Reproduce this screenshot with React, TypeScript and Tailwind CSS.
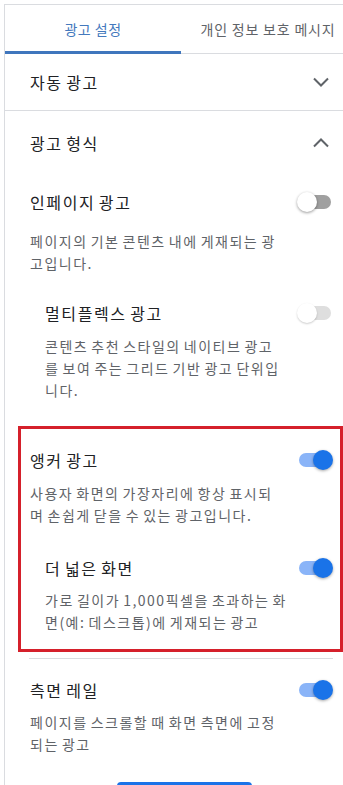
import React from 'react';

type ToggleState = 'on' | 'off' | 'disabled';

const Toggle: React.FC<{ state: ToggleState }> = ({ state }) => {
  const track =
    state === 'on' ? 'bg-[#8ab4f8]' : state === 'off' ? 'bg-[#a0a0a0]' : 'bg-[#dedede]';
  const thumb =
    state === 'on'
      ? 'right-0 bg-[#1a73e8] shadow-[0_1px_3px_rgba(0,0,0,0.35)]'
      : state === 'off'
        ? 'left-0 bg-white shadow-[0_1px_3px_rgba(0,0,0,0.4)]'
        : 'left-0 bg-white shadow-[0_1px_2px_rgba(0,0,0,0.2)]';
  return (
    <div className="relative h-[20px] w-[36px] shrink-0">
      <div className={`absolute left-[2px] right-[2px] top-[3px] h-[14px] rounded-full ${track}`} />
      <div className={`absolute top-0 h-[20px] w-[20px] rounded-full ${thumb}`} />
    </div>
  );
};

const Chevron: React.FC<{ up?: boolean }> = ({ up }) => (
  <svg width="24" height="24" viewBox="0 0 24 24" className="shrink-0">
    <path
      d={up ? 'M5 15.5L12 8.5L19 15.5' : 'M5 8.5L12 15.5L19 8.5'}
      fill="none"
      stroke="#5f6368"
      strokeWidth="2"
    />
  </svg>
);

// headings and descriptions get extra tracking so Hangul runs as wide as the original font
const heading = 'text-[16px] tracking-[1.6px] [word-spacing:-1.6px] text-[#202124]';
const body = 'text-[14px] leading-[22px] tracking-[1.5px] [word-spacing:-1.5px] text-[#5f6368]';

interface AdItemProps {
  title: string;
  desc: string;
  state: ToggleState;
  indent?: boolean;
  className?: string;
  descGap?: string;
  descWidth?: string;
}

const AdItem: React.FC<AdItemProps> = ({
  title,
  desc,
  state,
  indent,
  className = '',
  descGap = 'mt-[10px]',
  descWidth = 'w-[250px]',
}) => (
  <div className={className}>
    <div className={`flex h-[24px] items-center justify-between ${indent ? 'pl-[15px]' : ''}`}>
      <span className={`${heading} leading-[24px]`}>{title}</span>
      <Toggle state={state} />
    </div>
    <p className={`${descGap} ${body} ${descWidth} ${indent ? 'ml-[15px]' : ''}`}>{desc}</p>
  </div>
);

export default function App() {
  return (
    <div className="h-[785px] w-[343px] overflow-hidden bg-white font-['Noto_Sans_CJK_KR','Noto_Sans',sans-serif]">
      <div className="ml-[4px] mt-[4px] w-[353px] border-l border-t border-[#dadce0]">
        {/* tabs */}
        <div className="grid h-[49px] grid-cols-[176px_176px] border-b border-[#dadce0]">
          <div className="relative flex items-center justify-center text-[14px] tracking-[0.5px] text-[#4479bd]">
            광고 설정
            <div className="absolute bottom-[-1px] left-0 right-0 h-[3px] bg-[#3f76bd]" />
          </div>
          <div className="flex items-center justify-center pr-[2px] text-[14px] tracking-[0.8px] text-[#5f6368]">
            개인 정보 보호 메시지
          </div>
        </div>

        {/* auto ads */}
        <div className="flex h-[57px] items-center justify-between border-b border-[#dadce0] pb-[1px] pl-[25px] pr-[24px]">
          <span className={heading}>자동 광고</span>
          <Chevron />
        </div>

        {/* ad formats */}
        <div className="pl-[25px] pr-[24px]">
          <div className="flex h-[64px] items-center justify-between">
            <span className={heading}>광고 형식</span>
            <Chevron up />
          </div>

          <AdItem
            className="mt-[15px]"
            descGap="mt-[16px]"
            title="인페이지 광고"
            desc="페이지의 기본 콘텐츠 내에 게재되는 광고입니다."
            state="off"
          />
          <AdItem
            className="mt-[27px]"
            descGap="mt-[10px]"
            descWidth="w-[235px]"
            indent
            title="멀티플렉스 광고"
            desc="콘텐츠 추천 스타일의 네이티브 광고를 보여 주는 그리드 기반 광고 단위입니다."
            state="disabled"
          />

          {/* highlighted anchor section */}
          <div className="relative mt-[25px] pb-[19px] pt-[22px]">
            <div className="pointer-events-none absolute -left-[12px] -right-[10px] bottom-0 top-0 border-[3px] border-[#d5202b]" />
            <AdItem
              descGap="mt-[10px]"
              title="앵커 광고"
              desc="사용자 화면의 가장자리에 항상 표시되며 손쉽게 닫을 수 있는 광고입니다."
              state="on"
            />
            <AdItem
              className="mt-[30px]"
              descGap="mt-[9px]"
              descWidth="w-[248px]"
              indent
              title="더 넓은 화면"
              desc="가로 길이가 1,000픽셀을 초과하는 화면(예: 데스크톱)에 게재되는 광고"
              state="on"
            />
          </div>

          <div className="-ml-px mt-[6px] border-t border-[#dadce0]" />

          <AdItem
            className="mt-[19px]"
            descGap="mt-[9px]"
            title="측면 레일"
            desc="페이지를 스크롤할 때 화면 측면에 고정되는 광고"
            state="on"
          />

          <button
            aria-label="저장"
            className="ml-[87px] mt-[27px] block h-[36px] w-[135px] rounded-[4px] bg-[#1a73e8]"
          />
        </div>
      </div>
    </div>
  );
}
